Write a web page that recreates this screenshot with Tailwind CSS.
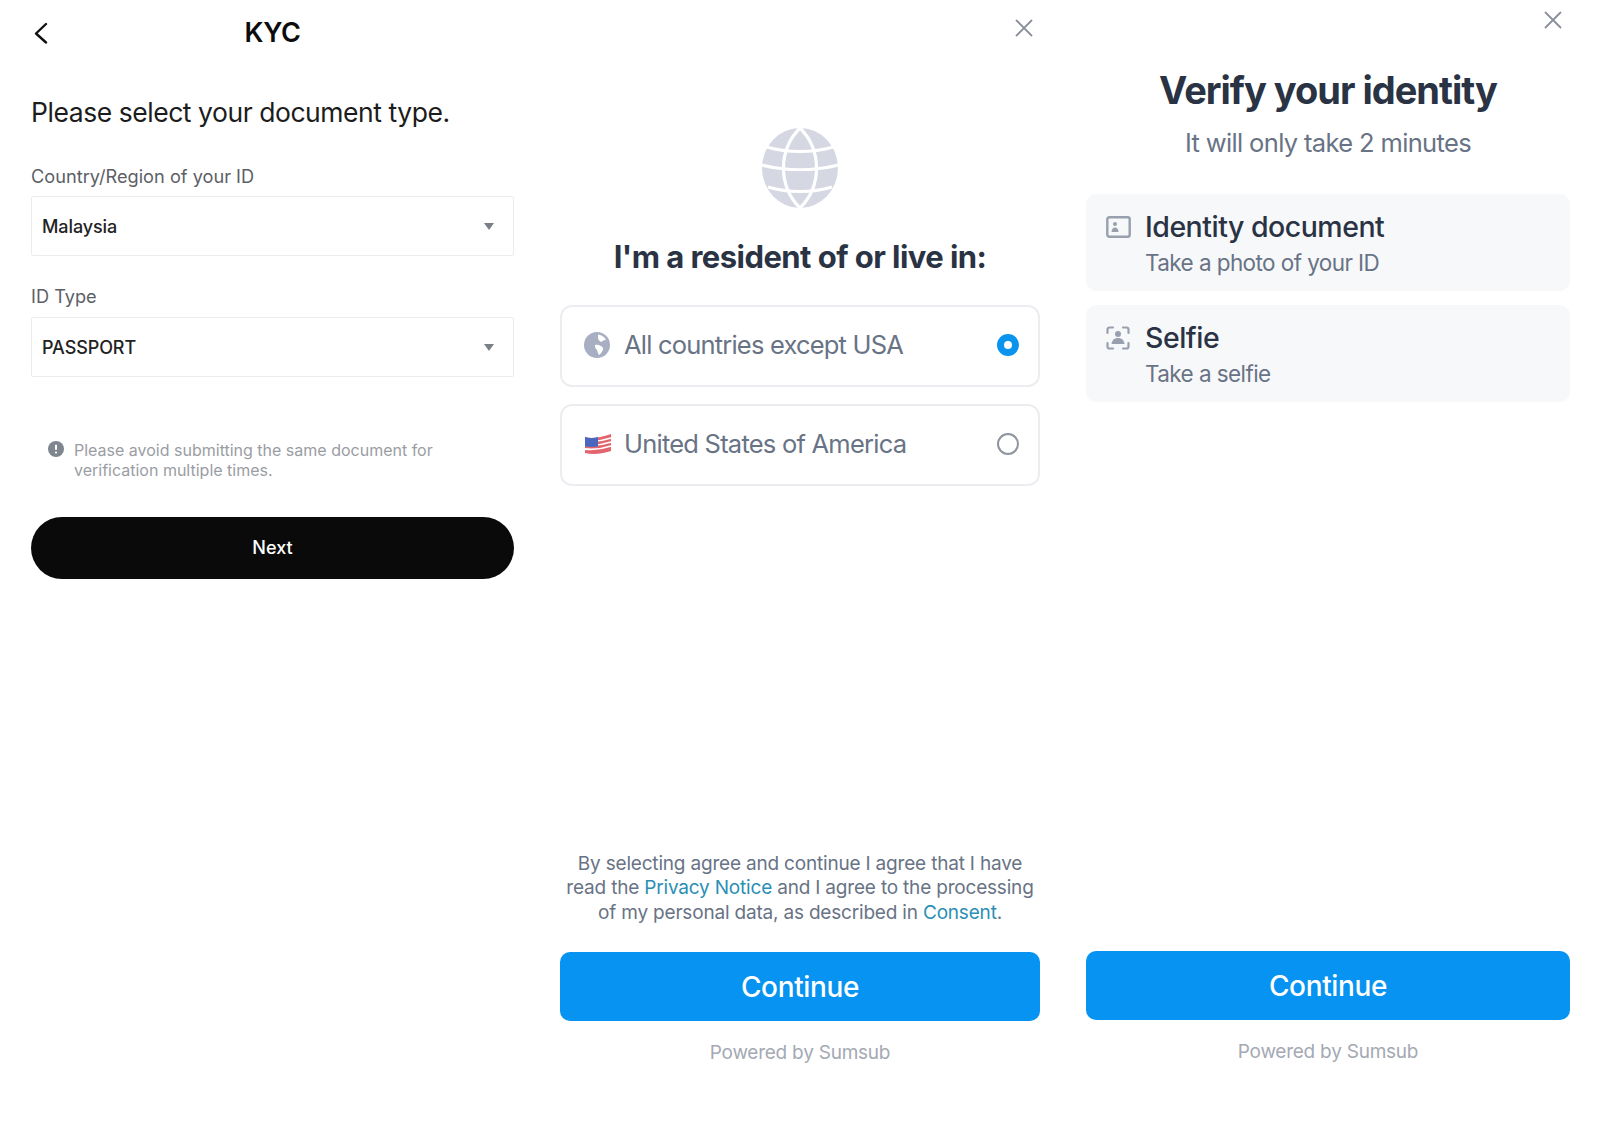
<!DOCTYPE html>
<html lang="en">
<head>
  <meta charset="UTF-8">
  <meta name="viewport" content="width=device-width, initial-scale=1.0">
  <title>KYC</title>
  <script src="https://cdn.jsdelivr.net/npm/@tailwindcss/browser@4"></script>
</head>
<body class="bg-white font-['Inter',sans-serif]">
<div class="flex h-[1132px] w-[1600px] overflow-hidden">

  <!-- KYC document type -->
  <section class="ml-[31px] flex w-[483px] flex-col">
    <header class="grid h-[66px] grid-cols-[1fr_auto_1fr] items-center">
      <svg class="ml-[2px] h-[22px] w-[15px]" viewBox="0 0 15 22" fill="none" stroke="#111" stroke-width="2.4" stroke-linecap="round" stroke-linejoin="round"><path d="M13 2 3 11.500 13 20.500" /></svg>
      <h1 class="text-[27px] font-semibold tracking-[-0.4px] text-[#0c0c0c]">KYC</h1>
    </header>
    <h2 class="mt-[28px] text-[26.5px] leading-[36px] tracking-[-0.45px] text-[#1c1c1c]">Please select your document type.</h2>

    <label class="mt-[34px] text-[18.2px] leading-[24px] text-[#5c5f66]">Country/Region of your ID</label>
    <div class="mt-[8px] flex h-[60px] items-center justify-between rounded-[2px] border border-[#ececed] pl-[10px] pr-[19px]">
      <span class="text-[18px] font-medium tracking-[-0.1px] text-[#222]">Malaysia</span>
      <svg class="h-[7px] w-[10px]" viewBox="0 0 10 7" fill="#7b7f86"><path d="M0 0h10L5 7z" /></svg>
    </div>

    <label class="mt-[28px] text-[18.2px] leading-[24px] text-[#5c5f66]">ID Type</label>
    <div class="mt-[9px] flex h-[60px] items-center justify-between rounded-[2px] border border-[#ececed] pl-[10px] pr-[19px]">
      <span class="text-[18px] font-medium tracking-[-0.1px] text-[#222]">PASSPORT</span>
      <svg class="h-[7px] w-[10px]" viewBox="0 0 10 7" fill="#7b7f86"><path d="M0 0h10L5 7z" /></svg>
    </div>

    <div class="mt-[63px] flex gap-[10px] pl-[17px]">
      <svg class="mt-[1px] h-[16px] w-[16px] shrink-0" viewBox="0 0 16 16"><circle cx="8" cy="8" r="8" fill="#7f868e" /><rect x="7" y="3.5" width="2" height="5.5" rx="1" fill="#fff" /><circle cx="8" cy="11.5" r="1.1" fill="#fff" /></svg>
      <p class="text-[16px] leading-[20px] text-[#9a9da3]">Please avoid submitting the same document for<br>verification multiple times.</p>
    </div>

    <button class="mt-[37px] h-[62px] rounded-full bg-[#0a0a0a] pb-[1px] text-[18px] font-medium text-white">Next</button>
  </section>

  <!-- Residence -->
  <section class="ml-[46px] flex w-[480px] flex-col pb-[67px] pt-[19px]">
    <div class="flex justify-end pr-[7px]">
      <svg class="h-[18px] w-[18px]" viewBox="0 0 18 18" fill="none" stroke="#8a909b" stroke-width="1.8" stroke-linecap="round"><path d="M1.5 1.5l15 15M16.5 1.5l-15 15" /></svg>
    </div>
    <div class="mt-[91px] flex justify-center">
      <svg class="h-[80px] w-[76px]" viewBox="0 0 76 80" fill="none">
        <ellipse cx="38" cy="40" rx="38" ry="40" fill="#d5d8e2" />
        <g stroke="#fff" stroke-width="3.200">
          <path d="M38 0C16 22 16 58 38 80M38 0C60 22 60 58 38 80" />
          <path d="M5 19C25 25 51 25 71 19M0 37C24 43 52 43 76 37M6 59C26 65 50 65 70 59" />
        </g>
      </svg>
    </div>
    <h2 class="mt-[29px] text-center text-[31px] font-bold leading-[40px] tracking-[-0.55px] text-[#2a3344]">I'm a resident of or live in:</h2>

    <div class="mt-[28px] flex flex-col gap-[17px]">
      <div class="flex h-[82px] items-center rounded-[12px] border-2 border-[#ebedf0] pb-[2px] pl-[22px] pr-[19px]">
        <svg class="h-[26px] w-[26px] shrink-0" viewBox="0 0 26 26">
          <circle cx="13" cy="13" r="13" fill="#a9afc2" />
          <path d="M14 2.500c3 .5 6 2 8 5-1.500 1-3.500 1-4.500 2.500-1.500-.5-3.500-2.500-3.500-4z" fill="#fff" />
          <path d="M11 13c3-1 7 1 8 3 .5 2-2 6-4 7-1-2-1.500-3-2-5-1-1-2.500-3-2-5z" fill="#fff" />
        </svg>
        <span class="ml-[14px] flex-1 text-[25.5px] leading-[30px] tracking-[-0.8px] text-[#687385]">All countries except USA</span>
        <span class="h-[22px] w-[22px] rounded-full border-[7px] border-[#0a94ee] bg-white"></span>
      </div>
      <div class="flex h-[82px] items-center rounded-[12px] border-2 border-[#ebedf0] pb-[2px] pl-[22px] pr-[19px]">
        <svg class="h-[22px] w-[28px] shrink-0" viewBox="0 0 28 22">
          <path d="M1 4c6 2 14 1 26-3v17c-10 3-18 4-26 2z" fill="#e2656d" />
          <path d="M1 8c9 1 17 0 26-3M1 12c9 1 17 0 26-3M1 16c9 1 17 0 26-3" fill="none" stroke="#fff" stroke-width="1.800" />
          <path d="M1 4c5 1.500 9 1.200 13-.1v9.300c-4 .8-8 1-13 .3z" fill="#4a66bf" />
        </svg>
        <span class="ml-[12px] flex-1 text-[25.5px] leading-[30px] tracking-[-0.77px] text-[#687385]">United States of America</span>
        <span class="h-[22px] w-[22px] rounded-full border-2 border-[#8e949e] bg-white"></span>
      </div>
    </div>

    <p class="mt-auto text-center text-[19px] leading-[24.500px] tracking-[-0.19px] text-[#687385]">By selecting agree and continue I agree that I have<br>read the <a class="text-[#2a8fb4]">Privacy Notice</a> and I agree to the processing<br>of my personal data, as described in <a class="text-[#2a8fb4]">Consent</a>.</p>
    <button class="mt-[27px] h-[69px] rounded-[10px] bg-[#0693f1] text-[28px] font-medium tracking-[-0.35px] text-white">Continue</button>
    <p class="mt-[20px] text-center text-[19px] leading-[24px] tracking-[-0.24px] text-[#a4a9b3]">Powered by Sumsub</p>
  </section>

  <!-- Verify identity -->
  <section class="ml-[46px] flex w-[484px] flex-col pb-[68px] pt-[11px]">
    <div class="flex justify-end pr-[8px]">
      <svg class="h-[18px] w-[18px]" viewBox="0 0 18 18" fill="none" stroke="#8a909b" stroke-width="1.8" stroke-linecap="round"><path d="M1.500 1.500l15 15M16.500 1.500l-15 15" /></svg>
    </div>
    <h2 class="mt-[38px] text-center text-[38px] font-bold leading-[46px] tracking-[-1px] text-[#2a3344]">Verify your identity</h2>
    <p class="mt-[14px] text-center text-[25.500px] leading-[32px] tracking-[-0.65px] text-[#687385]">It will only take 2 minutes</p>

    <div class="mt-[35px] flex flex-col gap-[14px]">
      <div class="flex h-[97px] rounded-[10px] bg-[#f7f8fa] pl-[20px] pt-[15px]">
        <svg class="mt-[7px] h-[22px] w-[25px] shrink-0" viewBox="0 0 25 22" fill="none">
          <rect x="1.300" y="1.300" width="22.400" height="19.400" rx="2" stroke="#98a0ae" stroke-width="2.400" />
          <circle cx="9" cy="8" r="2" fill="#98a0ae" />
          <path d="M5.500 16c0-3 1.500-4.500 3.500-4.500s3.500 1.500 3.500 4.500z" fill="#98a0ae" />
        </svg>
        <div class="ml-[14px]">
          <div class="text-[28.500px] font-medium leading-[36px] tracking-[-0.5px] text-[#2a3344]">Identity document</div>
          <div class="mt-[4px] text-[22.500px] leading-[28px] tracking-[-0.58px] text-[#687385]">Take a photo of your ID</div>
        </div>
      </div>
      <div class="flex h-[97px] rounded-[10px] bg-[#f7f8fa] pl-[20px] pt-[15px]">
        <svg class="mt-[6px] h-[24px] w-[24px] shrink-0" viewBox="0 0 24 24" fill="none">
          <path d="M1.500 7V3.500a2 2 0 0 1 2-2H7M17 1.500h3.500a2 2 0 0 1 2 2V7M22.500 17v3.500a2 2 0 0 1-2 2H17M7 22.500H3.500a2 2 0 0 1-2-2V17" stroke="#98a0ae" stroke-width="2.200" stroke-linecap="round" />
          <circle cx="12" cy="8" r="3" fill="#98a0ae" />
          <path d="M5.500 18c.5-4 3-6 6.500-6s6 2 6.500 6z" fill="#98a0ae" />
        </svg>
        <div class="ml-[15px]">
          <div class="text-[28.500px] font-medium leading-[36px] tracking-[-0.5px] text-[#2a3344]">Selfie</div>
          <div class="mt-[4px] text-[22.500px] leading-[28px] tracking-[-0.58px] text-[#687385]">Take a selfie</div>
        </div>
      </div>
    </div>

    <button class="mt-auto h-[69px] rounded-[10px] bg-[#0693f1] text-[28px] font-medium tracking-[-0.35px] text-white">Continue</button>
    <p class="mt-[20px] text-center text-[19px] leading-[24px] tracking-[-0.24px] text-[#a4a9b3]">Powered by Sumsub</p>
  </section>
</div>
</body>
</html>
